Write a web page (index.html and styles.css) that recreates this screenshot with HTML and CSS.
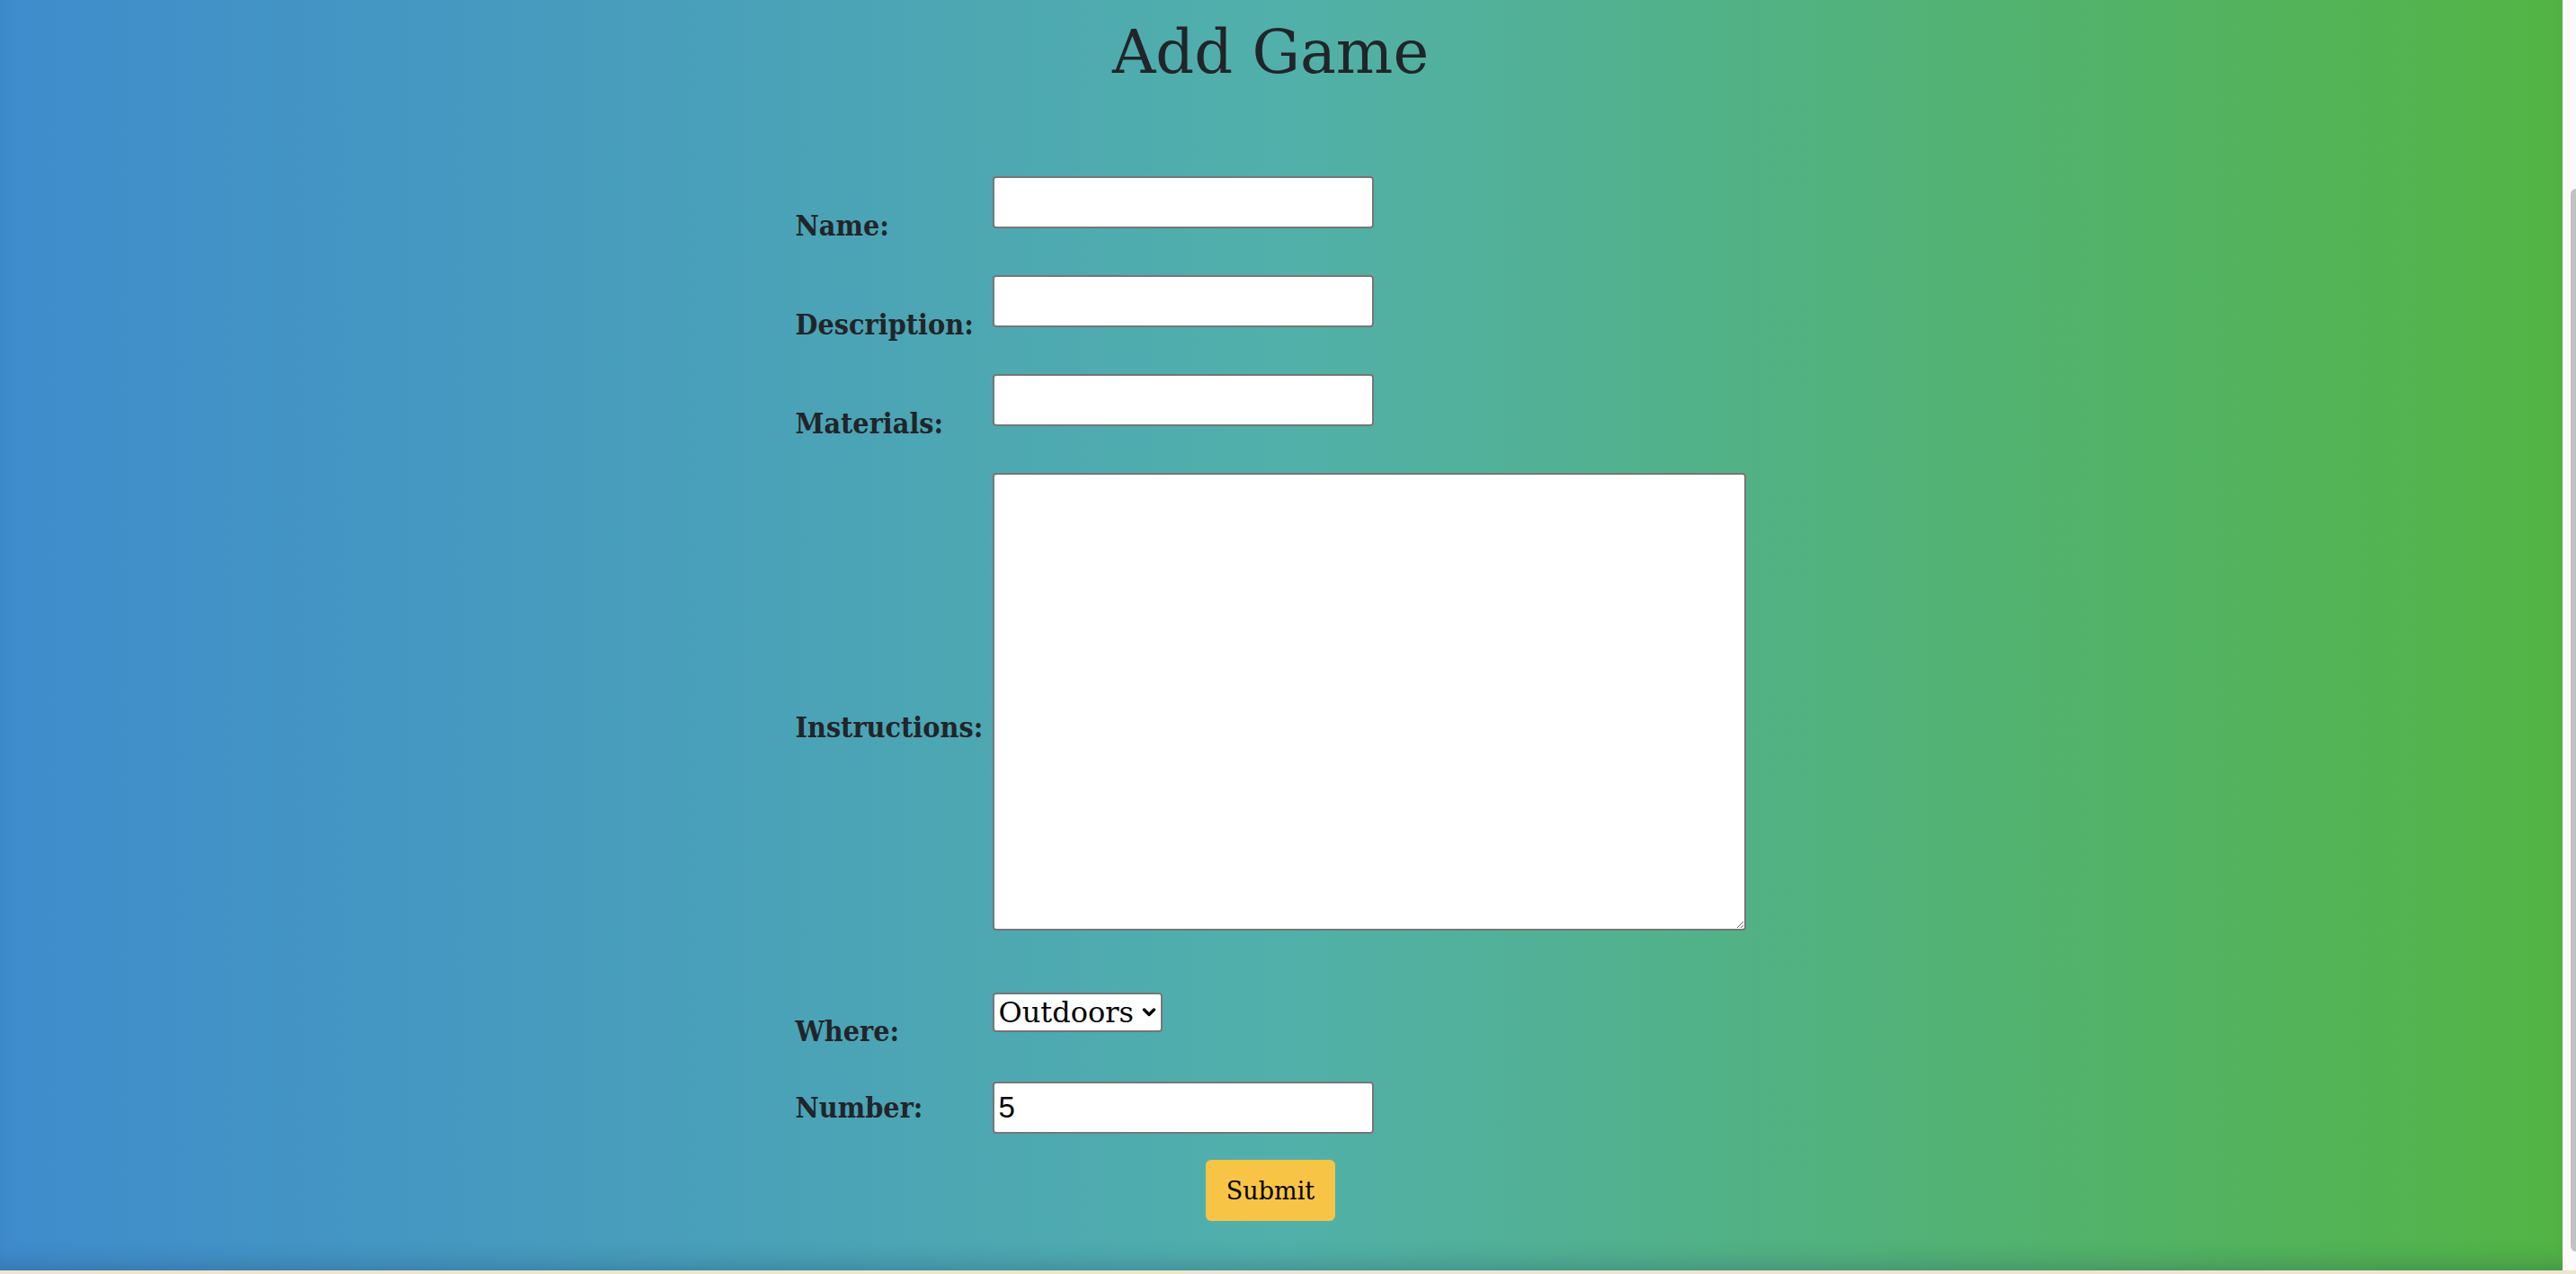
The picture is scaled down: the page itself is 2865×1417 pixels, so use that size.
FILE: index.html
```html
<!DOCTYPE html>
<html lang="en">
<head>
<meta charset="utf-8">
<title>Add Game</title>
<link rel="stylesheet" href="styles.css">
</head>
<body>
<div class="app">
  <main class="page">
    <h1 class="title">Add Game</h1>
    <form class="game-form">
      <label class="field-label" for="name">Name:</label>
      <input class="text-input" id="name" type="text">

      <label class="field-label" for="description">Description:</label>
      <input class="text-input" id="description" type="text">

      <label class="field-label" for="materials">Materials:</label>
      <input class="text-input" id="materials" type="text">

      <label class="field-label" for="instructions">Instructions:</label>
      <textarea class="text-area" id="instructions"></textarea>

      <label class="field-label" for="where">Where:</label>
      <div class="select-wrap">
        <select class="select" id="where">
          <option>Outdoors</option>
          <option>Indoors</option>
        </select>
        <svg class="chevron" viewBox="0 0 16 12" width="16" height="12" aria-hidden="true">
          <path d="M2.5 3 L8 8.5 L13.5 3" fill="none" stroke="#000" stroke-width="3.4" stroke-linecap="round" stroke-linejoin="round"/>
        </svg>
      </div>

      <label class="field-label" for="number">Number:</label>
      <input class="text-input number-input" id="number" type="number" value="5">
    </form>
    <button class="submit" type="button">Submit</button>
  </main>
  <div class="scrollbar"><div class="thumb"></div></div>
</div>
<div class="bottom-strip"></div>
</body>
</html>
```

FILE: styles.css
```css
html, body {
  margin: 0;
  padding: 0;
  width: 100%;
  height: 100%;
  overflow: hidden;
}

body {
  font-family: "DejaVu Serif", "Liberation Serif", serif;
  color: #212529;
  background: #e9e7d1;
}

.app {
  display: flex;
  height: 1413px;
}

.page {
  flex: 1;
  padding: 0 24px 0 0;
  background: linear-gradient(90deg, #3f8ccd 0%, #51b0aa 50%, #53b444 100%);
  box-shadow: inset 0 -22px 28px -18px rgba(20, 40, 80, 0.28);
}

.title {
  margin: 19px 0 0;
  font-size: 67px;
  font-weight: 400;
  line-height: normal;
  text-align: center;
  color: #212529;
}

.game-form {
  width: 1057px;
  margin: 99px auto 0;
  display: grid;
  grid-template-columns: 219px 838px;
  align-items: start;
}

.field-label {
  align-self: center;
  font-family: "DejaVu Serif Condensed", "DejaVu Serif", serif;
  font-stretch: condensed;
  font-weight: 700;
  font-size: 32px;
  line-height: normal;
  color: #212529;
  white-space: nowrap;
}

.text-input {
  box-sizing: border-box;
  width: 424px;
  height: 58px;
  margin: 0 0 52px;
  padding: 0 5px;
  border: 2px solid #767676;
  border-radius: 4px;
  background: #fff;
  font-family: "Liberation Sans", Arial, sans-serif;
  font-size: 33px;
  color: #000;
  outline: none;
}

.number-input {
  margin: 1px 0 0;
  -moz-appearance: textfield;
}

.number-input::-webkit-inner-spin-button,
.number-input::-webkit-outer-spin-button {
  -webkit-appearance: none;
  margin: 0;
}

.text-area {
  box-sizing: border-box;
  width: 838px;
  height: 509px;
  margin: 0 0 57px;
  border: 2px solid #767676;
  border-radius: 4px;
  background: #fff;
  display: block;
}

.select-wrap {
  position: relative;
  width: 189px;
  height: 44px;
  margin: 12px 0 54px;
}

.select {
  -webkit-appearance: none;
  appearance: none;
  box-sizing: border-box;
  width: 189px;
  height: 44px;
  padding: 0 0 0 5px;
  border: 2px solid #767676;
  border-radius: 4px;
  background: #fff;
  font-family: "DejaVu Serif", serif;
  font-size: 32px;
  line-height: 40px;
  color: #000;
}

.chevron {
  position: absolute;
  right: 7px;
  top: 16px;
  width: 16px;
  height: 12px;
  pointer-events: none;
}

.submit {
  display: block;
  margin: 29px auto 0;
  width: 144px;
  height: 68px;
  padding: 0;
  border: none;
  border-radius: 6px;
  background: #f8c445;
  font-family: "DejaVu Serif", serif;
  font-size: 27px;
  color: #000;
}

.scrollbar {
  width: 15px;
  box-sizing: border-box;
  padding: 210px 0 21px 8px;
  background: #fafafa;
  border-left: 1px solid #f0f0f0;
}

.thumb {
  height: 100%;
  background: #c2c2c2;
  border-radius: 6px 0 0 6px;
}

.bottom-strip {
  height: 4px;
  background: #e9e7d1;
}
```
